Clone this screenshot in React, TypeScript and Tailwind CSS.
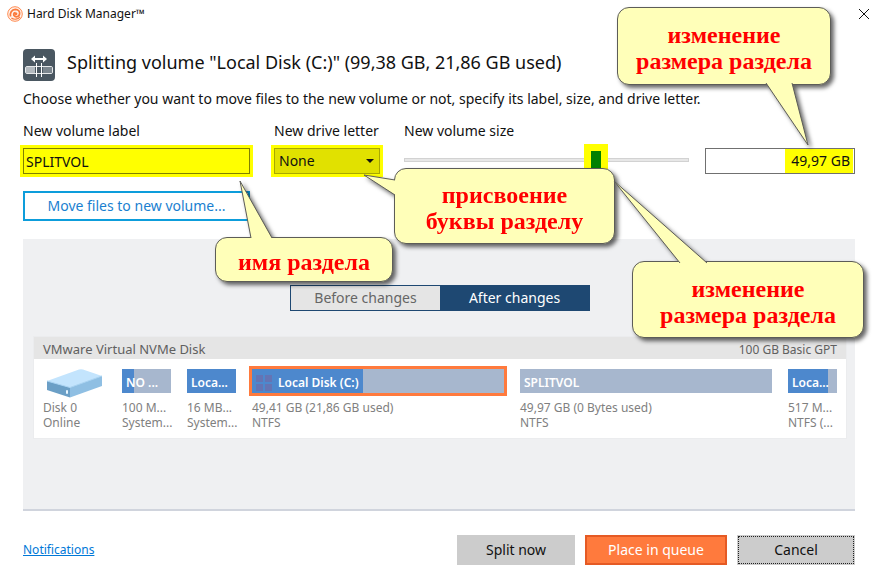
import { useState } from "react"
import type { ReactNode } from "react"
import clsx from "clsx"

type Volume = {
  id: number;
  label: string;
  size: string;
  fs: string;
  used: number;
  wide?: boolean;
  selected?: boolean;
}

const volumes: Volume[] = [
  { id: 1, label: "NO ...", size: "100 M...", fs: "System...", used: 25 },
  { id: 2, label: "Loca...", size: "16 MB...", fs: "System...", used: 100 },
  { id: 3, label: "Local Disk (C:)", size: "49,41 GB (21,86 GB used)", fs: "NTFS", used: 44, wide: true, selected: true },
  { id: 4, label: "SPLITVOL", size: "49,97 GB (0 Bytes used)", fs: "NTFS", used: 0, wide: true },
  { id: 5, label: "Loca...", size: "517 M...", fs: "NTFS (...", used: 82 },
]

function AppLogo() {
  return (
    <svg className="size-4" viewBox="0 0 16 16" fill="none" aria-hidden="true">
      <circle cx="8" cy="8" r="7.3" fill="#fff3ec" stroke="#ff8a50" strokeWidth="1" />
      <path d="M3.600 10.500C2.600 7 4.600 3.600 8.400 3.400C11.400 3.400 13 5.600 12.600 8C12.200 10.400 9.600 11.400 7.800 10.300C6 9.200 6.400 6.600 8.400 6.600" stroke="#fb7a3c" strokeWidth="1.700" />
      <path d="M4.400 12C7 14 11 13.600 13 10.800" stroke="#fb7a3c" strokeWidth="1.200" />
      <circle cx="8.800" cy="7.800" r="1.600" fill="#fb7a3c" />
    </svg>
  )
}

function SplitIcon() {
  return (
    <svg className="size-8 shrink-0" viewBox="0 0 32 32" fill="none" aria-hidden="true">
      <rect width="32" height="32" rx="4" fill="#4a5761" />
      <path d="M10 10H22" stroke="#fff" strokeWidth="2" />
      <path d="M8 10L12 6.500V13.500ZM24 10L20 6.500V13.500Z" fill="#fff" />
      <rect x="2.500" y="17.500" width="27" height="7" rx="1.500" stroke="#e6e8ea" />
      <rect x="3" y="18" width="9" height="6" fill="#b4babf" />
      <rect x="20" y="18" width="9" height="6" fill="#7c868e" />
      <path d="M13.500 14V28M18.500 14V28" stroke="#fff" />
    </svg>
  )
}

function DiskIcon() {
  return (
    <svg className="h-[29px] w-14" viewBox="0 0 56 29" aria-hidden="true">
      <path d="M0 12L32 .5Q34 0 36 .5L55 7L23 18.500Z" fill="#c3e4fd" />
      <path d="M0 12L23 18.500V28.500L0 21Z" fill="#6b9fc6" />
      <path d="M23 18.500L55 7V17L23 28.500Z" fill="#8fbfe3" />
      <path d="M0 12L23 18.500L55 7" fill="none" stroke="#a9d3f2" />
      <rect x="19" y="21" width="2" height="4" rx="1" fill="#e9f6ff" />
    </svg>
  )
}

function WindowsMark() {
  return (
    <svg className="size-4 shrink-0" viewBox="0 0 16 16" fill="#6474b4" aria-hidden="true">
      <path d="M0 0H7V7H0ZM9 0H16V7H9ZM0 9H7V16H0ZM9 9H16V16H9Z" />
    </svg>
  )
}

function Callout({ className, tailClass, box, tail, children }: {
  className: string;
  tailClass: string;
  box: string;
  tail: string;
  children: ReactNode;
}) {
  return (
    <div className={clsx("absolute z-10 flex items-center justify-center rounded-xl border border-[#5c5c58] bg-[#ffffb9] pt-1 text-center font-['Liberation_Serif',serif] text-2xl leading-[26px] font-bold text-[#ff0000] drop-shadow-[3px_3px_2px_rgba(0,0,0,0.6)]", className)}>
      <svg className={clsx("absolute overflow-visible", tailClass)} viewBox={box} aria-hidden="true">
        <path d={tail} fill="#ffffb9" stroke="#5c5c58" />
      </svg>
      <p>{children}</p>
    </div>
  )
}

function VolumeBlock({ volume }: { volume: Volume }) {
  return (
    <li className={volume.wide ? "flex-1" : "w-[49px]"}>
      <div className={clsx("relative flex h-6 items-center bg-[#a7b7ce]", volume.selected && "outline-3 outline-[#ff7a3d]")}>
        <div className="absolute inset-y-0 left-0 bg-[#4d88cd]" style={{ width: volume.used + "%" }} />
        <div className="relative flex items-center gap-[6px] px-1 pt-1 text-xs font-semibold text-white">
          {volume.selected && <WindowsMark />}
          <span>{volume.label}</span>
        </div>
      </div>
      <p className="mt-[7px] whitespace-nowrap">{volume.size}</p>
      <p className="whitespace-nowrap">{volume.fs}</p>
    </li>
  )
}

export default function App() {
  const [label, setLabel] = useState("SPLITVOL")
  const [size, setSize] = useState("49,97 GB")
  const [position, setPosition] = useState(69)
  const [after, setAfter] = useState(true)

  return (
    <main className="min-h-screen bg-white font-['Noto_Sans',sans-serif] text-sm text-[#111]">
      <header className="flex h-7 items-center gap-1 pr-[2px] pl-[7px]">
        <AppLogo />
        <span className="grow text-xs">Hard Disk Manager™</span>
        <button aria-label="Close" className="p-1">
          <svg className="size-3" viewBox="0 0 12 12" stroke="#111" aria-hidden="true">
            <path d="M1 1L11 11M11 1L1 11" />
          </svg>
        </button>
      </header>

      <div className="pt-[21px] pr-[21px] pl-[23px]">
        <div className="flex items-start gap-3">
          <SplitIcon />
          <h1 className="text-lg leading-[26px]">Splitting volume "Local Disk (C:)" (99,38 GB, 21,86 GB used)</h1>
        </div>
        <p className="mt-2 leading-5">Choose whether you want to move files to the new volume or not, specify its label, size, and drive letter.</p>

        <div className="mt-3 flex items-start">
          <div className="relative mr-6 w-[227px]">
            <label htmlFor="label" className="block leading-5">New volume label</label>
            <input id="label" value={label} onChange={e => setLabel(e.target.value)} className="mt-[7px] block h-[26px] w-full border border-[#808000] bg-[#ffff00] px-[2px] ring-3 ring-[#ffff00] outline-none" />
            <button className="mt-[17px] h-[30px] w-full border-2 border-[#0d9ddb] text-[#1a7fd0]">Move files to new volume...</button>
            <Callout className="top-[116px] left-48 h-[45px] w-[178px]" tailClass="-top-[57px] left-6 h-[57px] w-8" box="0 0 32 57" tail="M11 57L0 0L32 57">
              имя раздела
            </Callout>
          </div>

          <div className="relative mr-6 w-[106px]">
            <label htmlFor="letter" className="block leading-5 whitespace-nowrap">New drive letter</label>
            <div className="relative mt-[7px]">
              <select id="letter" className="block h-[26px] w-full appearance-none border border-[#a8a800] bg-[#e1e100] px-1 ring-3 ring-[#ffff00] outline-none">
                <option>None</option>
              </select>
              <svg className="pointer-events-none absolute top-[11px] right-[6px] h-1 w-2" viewBox="0 0 8 4" aria-hidden="true">
                <path d="M0 0H8L4 4Z" fill="#111" />
              </svg>
            </div>
            <Callout className="top-[47px] left-[120px] h-[76px] w-[221px]" tailClass="top-[6px] -left-[31px] h-5 w-8" box="0 0 32 20" tail="M31 5L0 0L31 20">
              присвоение<br />буквы разделу
            </Callout>
          </div>

          <div className="mr-4 min-w-0 flex-1">
            <label htmlFor="size" className="block leading-5">New volume size</label>
            <input id="size" type="range" value={position} onChange={e => setPosition(Number(e.target.value))} className="mt-[3px] block h-8 w-full appearance-none bg-transparent [&::-webkit-slider-runnable-track]:h-1 [&::-webkit-slider-runnable-track]:border [&::-webkit-slider-runnable-track]:border-[#d2d2d2] [&::-webkit-slider-runnable-track]:bg-[#e7e7e7] [&::-webkit-slider-thumb]:-mt-[15px] [&::-webkit-slider-thumb]:h-8 [&::-webkit-slider-thumb]:w-6 [&::-webkit-slider-thumb]:appearance-none [&::-webkit-slider-thumb]:border-[7px] [&::-webkit-slider-thumb]:border-[#ffff00] [&::-webkit-slider-thumb]:bg-[#008000]" />
          </div>

          <div className="relative w-[150px] pt-[27px]">
            <div className="flex h-[26px] justify-end border border-[#707070] pr-px">
              <input aria-label="New volume size in GB" value={size} onChange={e => setSize(e.target.value)} className="w-[68px] bg-[#ffff00] pr-[3px] text-right outline-none" />
            </div>
            <Callout className="right-6 bottom-[89px] h-[78px] w-[214px]" tailClass="-bottom-[61px] left-[148px] h-[62px] w-[42px]" box="0 0 42 62" tail="M0 0L42 62L26 0">
              изменение<br />размера раздела
            </Callout>
            <Callout className="top-[140px] -right-[9px] h-[77px] w-[232px]" tailClass="-top-[81px] -left-[19px] h-[82px] w-[93px]" box="0 0 93 82" tail="M66 82L0 0L93 82">
              изменение<br />размера раздела
            </Callout>
          </div>
        </div>

        <section className="mt-[18px] h-[272px] border-b-2 border-[#d0d4dd] bg-[#eff0f2] pt-[46px] pr-2 pl-[10px]">
          <div className="mx-auto flex h-[26px] w-[300px] border border-[#1e4872]">
            <button onClick={() => setAfter(false)} className={clsx("flex-1", after ? "bg-[#e5e5e5] text-[#666]" : "bg-[#1e4872] text-white")}>Before changes</button>
            <button onClick={() => setAfter(true)} className={clsx("flex-1", after ? "bg-[#1e4872] text-white" : "bg-[#e5e5e5] text-[#666]")}>After changes</button>
          </div>

          <div className="mt-[25px] border border-[#ebecee] bg-white">
            <div className="flex h-[22px] items-center justify-between bg-[#e5e5e5] px-[9px] pt-1 text-xs text-[#606060]">
              <h2 className="text-[13px]">VMware Virtual NVMe Disk</h2>
              <span>100 GB Basic GPT</span>
            </div>
            <div className="flex gap-4 px-[9px] pt-[10px] pb-2 text-xs leading-[15px] text-[#808080]">
              <div className="w-[63px]">
                <div className="h-[31px] pl-1"><DiskIcon /></div>
                <p>Disk 0</p>
                <p>Online</p>
              </div>
              <ul className="flex min-w-0 flex-1 gap-4">
                {volumes.map(volume => <VolumeBlock key={volume.id} volume={volume} />)}
              </ul>
            </div>
          </div>
        </section>

        <footer className="flex items-center gap-[10px] pt-6 pb-5">
          <a href="#notifications" className="mr-auto text-xs text-[#0078d7] underline">Notifications</a>
          <button className="h-[30px] w-[118px] bg-[#ccc]">Split now</button>
          <button className="h-[30px] w-[142px] border-2 border-[#e55a24] bg-[#ff7a3d] text-white">Place in queue</button>
          <button className="h-[30px] w-[118px] bg-[#ccc] outline-1 -outline-offset-2 outline-dotted outline-[#222]">Cancel</button>
        </footer>
      </div>
    </main>
  )
}
